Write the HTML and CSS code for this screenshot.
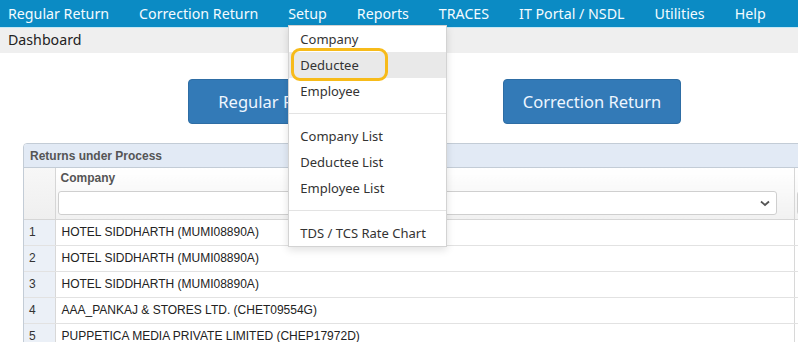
FILE: index.html
```html
<!DOCTYPE html>
<html>
<head>
<meta charset="utf-8">
<link rel="stylesheet" href="styles.css">
</head>
<body>
<nav class="topnav">
  <ul class="menu">
    <li class="menu-item">Regular Return</li>
    <li class="menu-item">Correction Return</li>
    <li class="menu-item has-drop">Setup
      <div class="dropdown">
        <div class="drop-item">Company</div>
        <div class="drop-item active">Deductee</div>
        <div class="drop-item">Employee</div>
        <div class="drop-divider"></div>
        <div class="drop-item">Company List</div>
        <div class="drop-item">Deductee List</div>
        <div class="drop-item">Employee List</div>
        <div class="drop-divider"></div>
        <div class="drop-item">TDS / TCS Rate Chart</div>
        <div class="mark"></div>
      </div>
    </li>
    <li class="menu-item">Reports</li>
    <li class="menu-item">TRACES</li>
    <li class="menu-item">IT Portal / NSDL</li>
    <li class="menu-item">Utilities</li>
    <li class="menu-item">Help</li>
  </ul>
</nav>
<div class="crumb">Dashboard</div>
<div class="actions">
  <button class="btn">Regular Return</button>
  <button class="btn">Correction Return</button>
</div>
<div class="panel">
  <div class="panel-title">Returns under Process</div>
  <table class="grid">
    <colgroup><col class="c-num"><col class="c-co"><col class="c-rest"></colgroup>
    <thead>
      <tr>
        <th class="num"></th>
        <th class="hcell"><div class="hlabel">Company</div><div class="select"><svg class="chev" width="10" height="7" viewBox="0 0 10 7"><path d="M1 1.5 L5 5 L9 1.5" fill="none" stroke="#555" stroke-width="1.8"/></svg></div></th>
        <th class="hcell"><div class="hlabel">&nbsp;</div><div class="select"></div></th>
      </tr>
    </thead>
    <tbody>
      <tr><td class="num">1</td><td>HOTEL SIDDHARTH (MUMI08890A)</td><td></td></tr>
      <tr><td class="num">2</td><td>HOTEL SIDDHARTH (MUMI08890A)</td><td></td></tr>
      <tr><td class="num">3</td><td>HOTEL SIDDHARTH (MUMI08890A)</td><td></td></tr>
      <tr><td class="num">4</td><td>AAA_PANKAJ &amp; STORES LTD. (CHET09554G)</td><td></td></tr>
      <tr><td class="num">5</td><td>PUPPETICA MEDIA PRIVATE LIMITED (CHEP17972D)</td><td></td></tr>
    </tbody>
  </table>
</div>
</body>
</html>
```
FILE: styles.css
```css
* { box-sizing: border-box; }
html, body { margin: 0; padding: 0; overflow: hidden; background: #fff; }
body { font-family: "Noto Sans", "Open Sans", sans-serif; width: 798px; height: 342px; }

.topnav { background: #0b8bc4; height: 27px; position: relative; z-index: 5; }
.menu { list-style: none; margin: 0; padding: 0 0 0 8px; display: flex; gap: 30px; height: 27px; align-items: center; }
.menu-item { color: #f4fbff; font-size: 14.22px; line-height: 27px; white-space: nowrap; position: relative; }

.dropdown {
  position: absolute; left: 0; top: 25px; width: 159px;
  background: #fff; border: 1px solid #d3d3d3;
  box-shadow: 0 3px 8px rgba(0,0,0,0.12);
  padding: 0;
}
.drop-item { color: #333; font-size: 13px; height: 26px; line-height: 26px; padding-left: 11px; }
.drop-item.active { background: #e9e9e9; }
.drop-divider { height: 1px; background: #e3e3e3; margin: 9px 0; }
.mark {
  position: absolute; left: 2px; top: 22px; width: 97px; height: 33px;
  border: 3px solid #f7bb1a; border-radius: 9px;
}

.crumb { background: #efefef; border-top: 1px solid #c6e8f5; height: 26px; line-height: 24px; padding-left: 8px; font-size: 14.2px; color: #222; }

.actions { display: flex; gap: 137px; padding: 26px 0 0 188px; }
.btn {
  width: 178px; height: 45px; background: #337ab7; color: #eef6ff; border: 1px solid #2e6da4;
  border-radius: 4px; font-family: "Noto Sans", "Open Sans", sans-serif; font-size: 16.5px; padding: 0;
}

.panel {
  margin: 19px 0 0 23px; width: 900px; border: 1px solid #c3ccd6; border-radius: 4px 0 0 0; overflow: hidden;
  font-family: "Liberation Sans", Arial, sans-serif; font-size: 12px;
}
.panel-title { background: #e2eaf5; height: 24px; line-height: 24px; padding-left: 6px; font-weight: bold; color: #555; border-bottom: 1px solid #c3ccd6; }

.grid { border-collapse: collapse; table-layout: fixed; width: 100%; }
.c-num { width: 31px; }
.c-co { width: 739px; }
.grid th { font-weight: bold; color: #555; text-align: left; background: linear-gradient(#ffffff, #f1f1f1); border-right: 1px solid #d6d6d6; border-bottom: 1px solid #d6d6d6; height: 51px; vertical-align: top; padding: 0; }
.grid th.num { background: linear-gradient(#f7f7f7, #efefef); }
.hcell { padding: 0 2px !important; }
.hlabel { height: 23px; line-height: 21px; padding-left: 3px; }
.select { position: relative; height: 24px; background: #fff; border: 1px solid #cfcfcf; border-radius: 3px; margin-right: 15px; }
.chev { position: absolute; right: 6px; top: 8px; }
.grid td { height: 26px; border-bottom: 1px solid #e2e2e2; border-right: 1px solid #d8d8d8; padding: 0 0 0 6px; color: #222; white-space: nowrap; }
.grid td.num { background: #ebf0f7; padding-left: 5px; color: #333; }
```
